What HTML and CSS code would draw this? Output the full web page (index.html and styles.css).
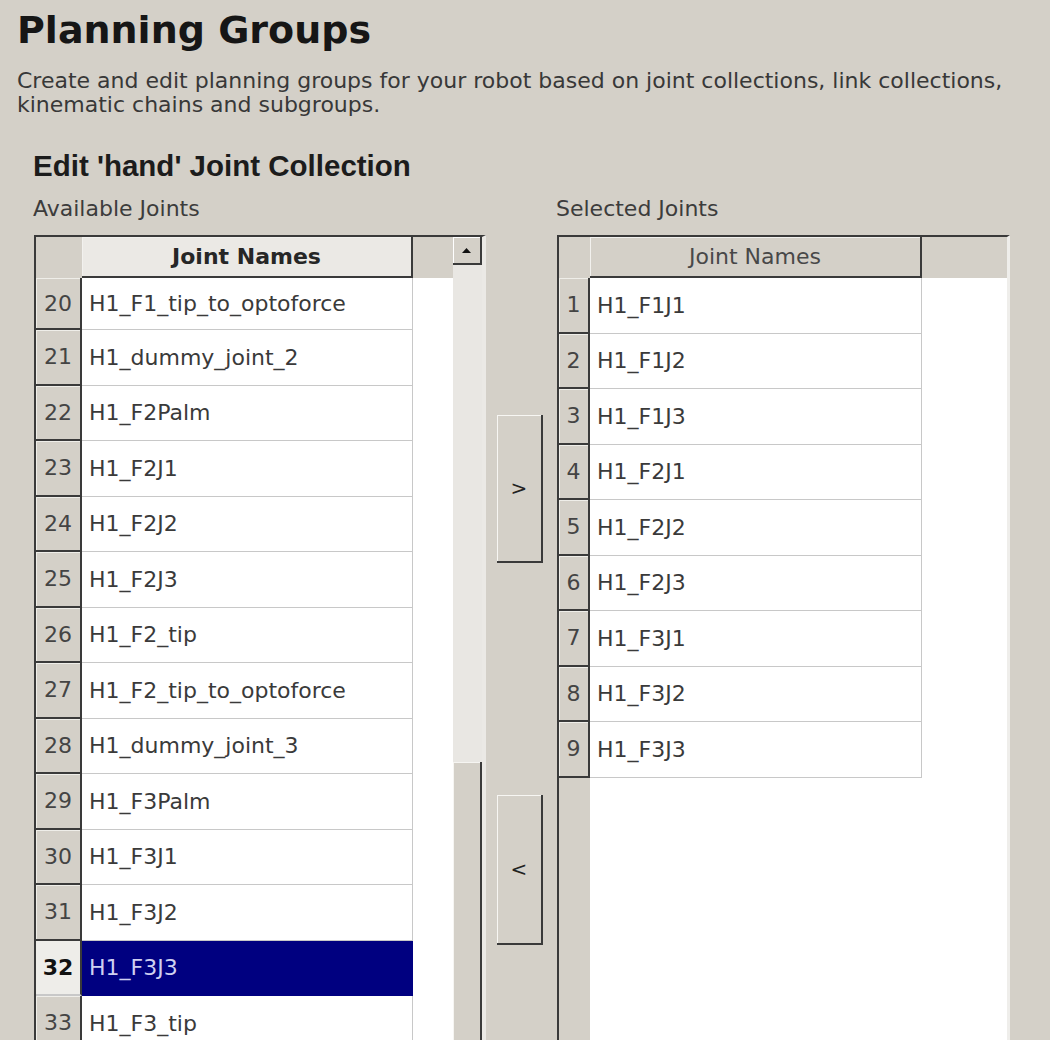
FILE: index.html
```html
<!DOCTYPE html>
<html lang="en">
<head>
    <meta charset="UTF-8">
    <title>Planning Groups</title>
    <link rel="stylesheet" href="styles.css">
</head>
<body>
    <div class="page">
        <h1 class="title">Planning Groups</h1>
        <p class="intro">Create and edit planning groups for your robot based on joint collections, link collections, kinematic chains and subgroups.</p>

        <div class="editor">
            <h2 class="editor-title">Edit 'hand' Joint Collection</h2>

            <div class="columns">
                <div class="list-label">Available Joints</div>
                <div class="list-label label-right">Selected Joints</div>

                <!-- available joints -->
                <div class="grid-frame frame-left">
                    <div class="viewport">
                        <div class="thead cols-left">
                            <div class="corner"></div>
                            <div class="hcell hcell-active">Joint Names</div>
                            <div class="hfill"></div>
                        </div>
                        <div class="row cols-left first"><div class="num">20</div><div class="name">H1_F1_tip_to_optoforce</div><div class="fill"></div></div>
                        <div class="row cols-left"><div class="num">21</div><div class="name">H1_dummy_joint_2</div><div class="fill"></div></div>
                        <div class="row cols-left"><div class="num">22</div><div class="name">H1_F2Palm</div><div class="fill"></div></div>
                        <div class="row cols-left"><div class="num">23</div><div class="name">H1_F2J1</div><div class="fill"></div></div>
                        <div class="row cols-left"><div class="num">24</div><div class="name">H1_F2J2</div><div class="fill"></div></div>
                        <div class="row cols-left"><div class="num">25</div><div class="name">H1_F2J3</div><div class="fill"></div></div>
                        <div class="row cols-left"><div class="num">26</div><div class="name">H1_F2_tip</div><div class="fill"></div></div>
                        <div class="row cols-left"><div class="num">27</div><div class="name">H1_F2_tip_to_optoforce</div><div class="fill"></div></div>
                        <div class="row cols-left"><div class="num">28</div><div class="name">H1_dummy_joint_3</div><div class="fill"></div></div>
                        <div class="row cols-left"><div class="num">29</div><div class="name">H1_F3Palm</div><div class="fill"></div></div>
                        <div class="row cols-left"><div class="num">30</div><div class="name">H1_F3J1</div><div class="fill"></div></div>
                        <div class="row cols-left"><div class="num">31</div><div class="name">H1_F3J2</div><div class="fill"></div></div>
                        <div class="row cols-left selected"><div class="num">32</div><div class="name">H1_F3J3</div><div class="fill"></div></div>
                        <div class="row cols-left"><div class="num">33</div><div class="name">H1_F3_tip</div><div class="fill"></div></div>
                    </div>
                    <div class="vscroll">
                        <div class="sb-btn">
                            <svg width="9" height="5" viewBox="0 0 9 5"><polygon points="4.5,0 9,5 0,5" fill="#111"/></svg>
                        </div>
                        <div class="sb-track"></div>
                        <div class="sb-handle"></div>
                    </div>
                </div>

                <div class="movers">
                    <button class="move-btn btn-add">&gt;</button>
                    <button class="move-btn btn-remove">&lt;</button>
                </div>

                <!-- selected joints -->
                <div class="grid-frame frame-right">
                    <div class="viewport viewport-right">
                        <div class="thead cols-right">
                            <div class="corner"></div>
                            <div class="hcell">Joint Names</div>
                            <div class="hfill"></div>
                        </div>
                        <div class="row cols-right"><div class="num">1</div><div class="name">H1_F1J1</div><div class="fill"></div></div>
                        <div class="row cols-right"><div class="num">2</div><div class="name">H1_F1J2</div><div class="fill"></div></div>
                        <div class="row cols-right"><div class="num">3</div><div class="name">H1_F1J3</div><div class="fill"></div></div>
                        <div class="row cols-right"><div class="num">4</div><div class="name">H1_F2J1</div><div class="fill"></div></div>
                        <div class="row cols-right"><div class="num">5</div><div class="name">H1_F2J2</div><div class="fill"></div></div>
                        <div class="row cols-right"><div class="num">6</div><div class="name">H1_F2J3</div><div class="fill"></div></div>
                        <div class="row cols-right"><div class="num">7</div><div class="name">H1_F3J1</div><div class="fill"></div></div>
                        <div class="row cols-right"><div class="num">8</div><div class="name">H1_F3J2</div><div class="fill"></div></div>
                        <div class="row cols-right"><div class="num">9</div><div class="name">H1_F3J3</div><div class="fill"></div></div>
                    </div>
                </div>
            </div>
        </div>
    </div>
</body>
</html>
```

FILE: styles.css
```css
* {
    box-sizing: border-box;
}
html, body {
    height: 1040px;
    overflow: hidden;
}
body {
    margin: 0;
    background: #d4d0c8;
    font-family: "DejaVu Sans", "Noto Sans", sans-serif;
    font-size: 22px;
    color: #333;
}
.page {
    padding: 8px 0 0 17px;
}
.title {
    margin: 0;
    font-size: 38px;
    line-height: 44px;
    font-weight: bold;
    color: #161616;
}
.intro {
    margin: 17px 0 0;
    line-height: 24px;
    color: #383838;
    padding-right: 10px;
}
.editor {
    padding-left: 16px;
}
.editor-title {
    margin: 33px 0 0;
    font-family: "Liberation Sans", Arial, sans-serif;
    font-size: 29.5px;
    line-height: 32px;
    font-weight: bold;
    color: #1c1c1c;
}
.columns {
    margin-top: 14px;
    display: grid;
    grid-template-columns: 453px 70px 454px;
    grid-template-rows: 26px auto;
    row-gap: 13px;
}
.list-label {
    line-height: 26px;
    color: #3c3c3c;
}
.label-right {
    grid-column: 3;
}
.grid-frame {
    display: flex;
    height: 820px;
    border-top: 2px solid #3a3a3a;
    border-left: 2px solid #3a3a3a;
    background: #fff;
}
.frame-left {
    grid-column: 1;
    grid-row: 2;
    margin-left: 1px;
    border-right: 4px solid #ebe9e5;
}
.frame-right {
    grid-column: 3;
    grid-row: 2;
    margin-left: 1px;
    border-right: 3px solid #efeeeb;
}
.viewport {
    flex: 1;
    background: linear-gradient(to right, #d4d0c8 0 46px, #fff 46px);
}
.viewport-right {
    background: linear-gradient(to right, #d4d0c8 0 31px, #fff 31px);
}
.cols-left {
    display: grid;
    grid-template-columns: 46px 331px 1fr;
}
.cols-right {
    display: grid;
    grid-template-columns: 31px 332px 1fr;
}
.thead {
    height: 41px;
    background: #d4d0c8;
}
.hcell {
    display: flex;
    align-items: center;
    justify-content: center;
    border-right: 2px solid #3a3a3a;
    border-bottom: 2px solid #3a3a3a;
    box-shadow: inset 1px 1px 0 #f2f1ee;
    color: #484848;
}
.hcell-active {
    background: #ebe9e5;
    font-weight: bold;
    color: #262626;
}
.row {
    height: 55.5px;
}
.row.first {
    height: 52px;
}
.num {
    display: flex;
    align-items: center;
    justify-content: center;
    background: #d4d0c8;
    border-right: 2px solid #3a3a3a;
    border-bottom: 2px solid #3a3a3a;
    box-shadow: inset 1px 1px 0 #efeee9;
    color: #444;
}
.name {
    display: flex;
    align-items: center;
    padding-left: 7px;
    background: #fff;
    border-right: 1px solid #c8c8c8;
    border-bottom: 1px solid #c8c8c8;
    color: #3a3a3a;
    white-space: nowrap;
}
.fill {
    background: #fff;
}
.selected .num {
    background: #eeede9;
    font-weight: bold;
    color: #111;
    border-bottom-color: #c8c8c8;
}
.selected .name {
    background: #000080;
    border-color: #000080;
    color: #cfd0f0;
}
.vscroll {
    width: 29px;
    display: flex;
    flex-direction: column;
    background: #e9e7e3;
}
.sb-btn {
    height: 28px;
    display: flex;
    align-items: center;
    justify-content: center;
    background: #d4d0c8;
    border-right: 2px solid #3a3a3a;
    border-bottom: 2px solid #3a3a3a;
    box-shadow: inset 1px 1px 0 #fff;
}
.sb-track {
    height: 497px;
}
.sb-handle {
    flex: 1;
    background: #d4d0c8;
    border-right: 2px solid #3a3a3a;
    box-shadow: inset 1px 1px 0 #f6f5f2;
}
.movers {
    grid-column: 2;
    grid-row: 2;
    display: flex;
    flex-direction: column;
    padding: 180px 0 0 11px;
}
.move-btn {
    width: 46px;
    padding: 0;
    background: #d4d0c8;
    border: none;
    border-right: 2px solid #3a3a3a;
    border-bottom: 2px solid #3a3a3a;
    box-shadow: inset 1px 1px 0 #f7f6f3;
    font-family: "DejaVu Sans", sans-serif;
    font-size: 20px;
    color: #222;
}
.btn-add {
    height: 148px;
}
.btn-remove {
    height: 150px;
    margin-top: 232px;
}
```
